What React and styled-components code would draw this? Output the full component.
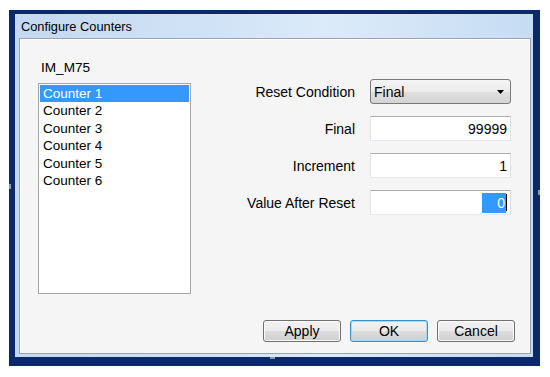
import React from "react";
import styled, { createGlobalStyle, css } from "styled-components";

const GlobalStyle = createGlobalStyle`
  html, body { margin: 0; padding: 0; background: #ffffff; }
  body { font-family: "Liberation Sans", Arial, sans-serif; color: #000; }
`;

const Page = styled.div`
  width: 550px;
  height: 377px;
  box-sizing: border-box;
  padding: 10px 0 0 9px;
`;

const Window = styled.div`
  position: relative;
  width: 531px;
  height: 356px;
  box-sizing: border-box;
  background: #0b2868;
  padding: 4px 7px 9px 6px;
  display: flex;
`;

const Grip = styled.div`
  position: absolute;
  background: #8c98aa;
  ${(p) =>
    p.$side === "left" &&
    css`
      left: 0;
      top: 174px;
      width: 2px;
      height: 5px;
    `}
  ${(p) =>
    p.$side === "right" &&
    css`
      right: 0;
      top: 180px;
      width: 2px;
      height: 5px;
    `}
  ${(p) =>
    p.$side === "bottom" &&
    css`
      left: 261px;
      bottom: 7px;
      width: 5px;
      height: 2px;
    `}
`;

const Frame = styled.div`
  flex: 1;
  display: flex;
  flex-direction: column;
  background: linear-gradient(to right, #c3d9f1 0%, #d3e5f7 45%, #dcebf9 60%, #c6dcf3 100%);
  padding: 0 2px 3px 4px;
`;

const TitleBar = styled.div`
  height: 24px;
  display: flex;
  align-items: center;
  padding-left: 2px;
  font-size: 12.8px;
  color: #000;
`;

const Panel = styled.div`
  flex: 1;
  display: flex;
  flex-direction: column;
  background: #f5f5f5;
  border: 1px solid #9ba4ae;
  box-shadow: inset 1px 1px 0 #ffffff;
  padding: 21px 15px 11px 18px;
`;

const Body = styled.div`
  flex: 1;
  display: flex;
  align-items: flex-start;
`;

const LeftColumn = styled.div`
  width: 153px;
  display: flex;
  flex-direction: column;
`;

const GroupLabel = styled.div`
  height: 15px;
  line-height: 15px;
  padding-left: 3px;
  font-size: 13.6px;
  margin-bottom: 8px;
`;

const ListBox = styled.div`
  width: 153px;
  height: 211px;
  box-sizing: border-box;
  border: 1px solid #a3a6ab;
  background: #ffffff;
  padding: 1px;
`;

const ListItem = styled.div`
  height: 17.4px;
  line-height: 17.4px;
  padding-left: 3px;
  font-size: 13.5px;
  white-space: nowrap;
  background: ${(p) => (p.$selected ? "#3399ff" : "transparent")};
  color: ${(p) => (p.$selected ? "#ffffff" : "#000000")};
`;

const Form = styled.div`
  flex: 1;
  display: grid;
  grid-template-columns: 1fr 141px;
  grid-auto-rows: 25px;
  column-gap: 15px;
  row-gap: 12px;
  margin-top: 19px;
  margin-right: 4px;
`;

const FieldLabel = styled.div`
  display: flex;
  align-items: center;
  justify-content: flex-end;
  font-size: 14px;
  white-space: nowrap;
`;

const Combo = styled.div`
  box-sizing: border-box;
  display: flex;
  align-items: center;
  justify-content: space-between;
  border: 1px solid #7a7a7a;
  border-radius: 3px;
  background: linear-gradient(#f4f4f4 0%, #ececec 50%, #e0e0e0 51%, #d4d4d4 100%);
  padding: 0 6px 0 3px;
  font-size: 14px;
`;

const Field = styled.div`
  box-sizing: border-box;
  display: flex;
  align-items: center;
  justify-content: flex-end;
  border: 1px solid;
  border-color: #abadb3 #dbdfe6 #e3e9ef #e2e3ea;
  background: #ffffff;
  padding-right: 3px;
  font-size: 14px;
`;

const Selection = styled.span`
  background: #3399ff;
  color: #ffffff;
  height: 20px;
  line-height: 20px;
  padding-left: 15px;
  padding-right: 1px;
`;

const Caret = styled.span`
  width: 1px;
  height: 17px;
  background: #000;
`;

const ButtonRow = styled.div`
  display: flex;
  justify-content: flex-end;
  gap: 9px;
`;

const Button = styled.div`
  box-sizing: border-box;
  width: 78px;
  height: 22px;
  display: flex;
  align-items: center;
  justify-content: center;
  border: 1px solid ${(p) => (p.$default ? "#3c8fc4" : "#707070")};
  border-radius: 3px;
  background: linear-gradient(#f2f2f2 0%, #ebebeb 50%, #dddddd 51%, #cfcfcf 100%);
  box-shadow: ${(p) => (p.$default ? "inset 0 0 0 1px #9fdcf8" : "inset 0 0 0 1px #fbfbfb")};
  font-size: 14px;
  color: #000;
`;

const counters = ["Counter 1", "Counter 2", "Counter 3", "Counter 4", "Counter 5", "Counter 6"];

export default function App() {
  return (
    <>
      <GlobalStyle />
      <Page>
        <Window>
          <Grip $side="left" />
          <Grip $side="right" />
          <Grip $side="bottom" />
          <Frame>
            <TitleBar>Configure Counters</TitleBar>
            <Panel>
              <Body>
                <LeftColumn>
                  <GroupLabel>IM_M75</GroupLabel>
                  <ListBox>
                    {counters.map((c, i) => (
                      <ListItem key={c} $selected={i === 0}>
                        {c}
                      </ListItem>
                    ))}
                  </ListBox>
                </LeftColumn>
                <Form>
                  <FieldLabel>Reset Condition</FieldLabel>
                  <Combo>
                    <span>Final</span>
                    <svg width="7" height="4" viewBox="0 0 7 4">
                      <polygon points="0,0 7,0 3.5,4" fill="#000" />
                    </svg>
                  </Combo>
                  <FieldLabel>Final</FieldLabel>
                  <Field>99999</Field>
                  <FieldLabel>Increment</FieldLabel>
                  <Field>1</Field>
                  <FieldLabel>Value After Reset</FieldLabel>
                  <Field>
                    <Selection>0</Selection>
                    <Caret />
                  </Field>
                </Form>
              </Body>
              <ButtonRow>
                <Button>Apply</Button>
                <Button $default>OK</Button>
                <Button>Cancel</Button>
              </ButtonRow>
            </Panel>
          </Frame>
        </Window>
      </Page>
    </>
  );
}
